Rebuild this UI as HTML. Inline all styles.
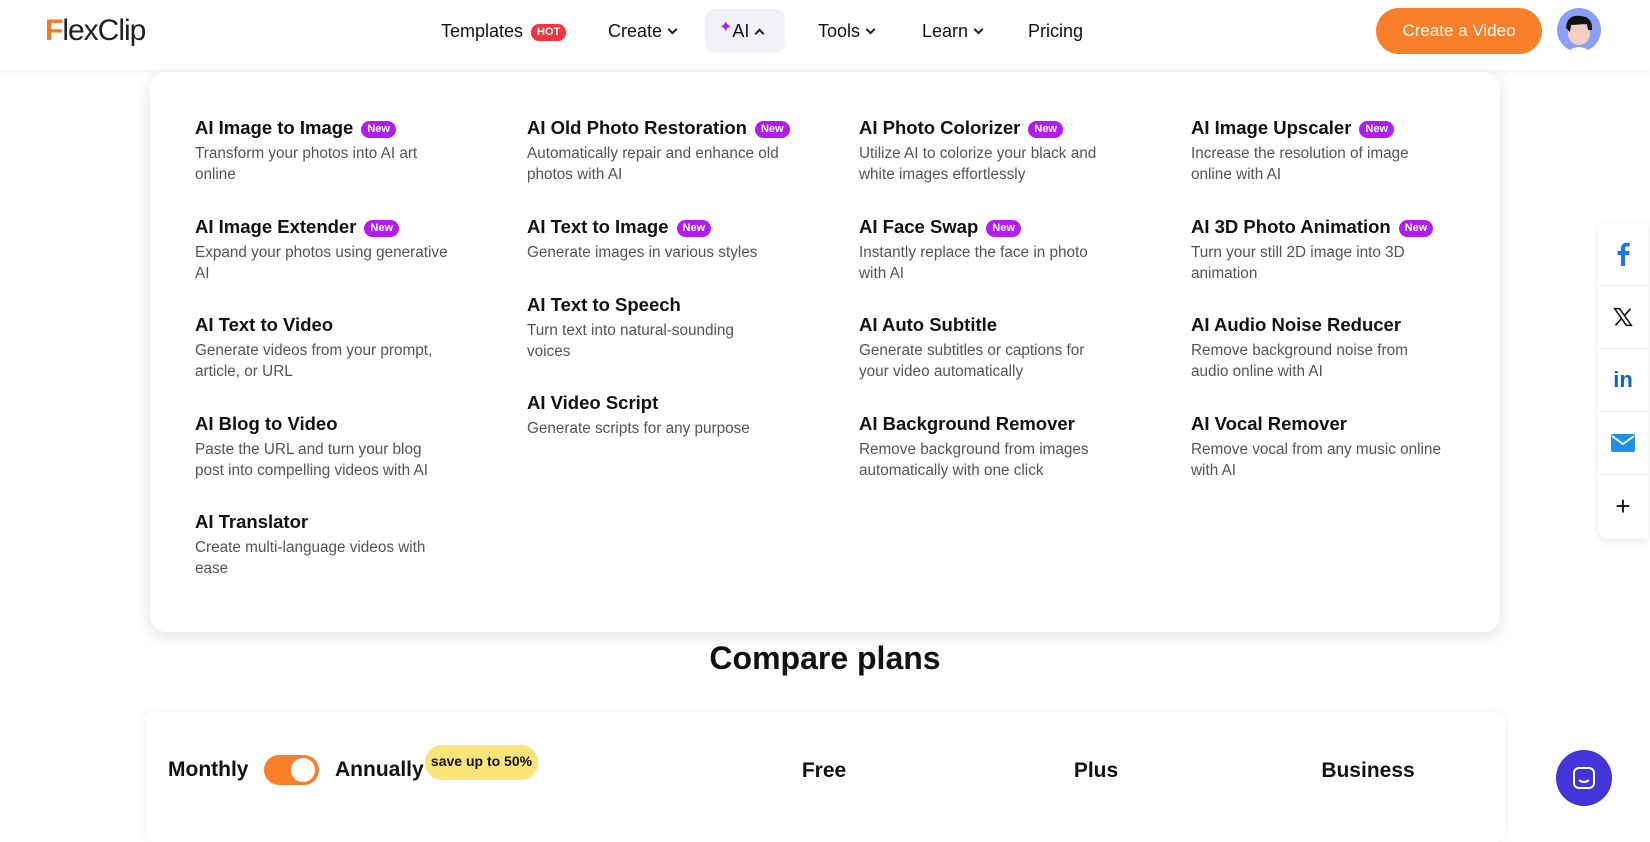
<!DOCTYPE html>
<html><head><meta charset="utf-8"><style>
*{margin:0;padding:0;box-sizing:border-box}
body{width:1650px;height:825px;overflow:hidden;background:#fff;font-family:"Liberation Sans",sans-serif;color:#111;position:relative}
.hdr{position:absolute;left:0;top:0;width:1650px;height:70px;background:#fff;box-shadow:0 2px 6px rgba(0,0,0,.05)}
.nav{position:absolute;top:21px;font-size:18px;color:#111}
.chev{display:inline-block;width:7px;height:7px;border-right:2px solid #222;border-bottom:2px solid #222;transform:rotate(45deg);margin-left:7px;position:relative;top:-4px}
.chev.up{transform:rotate(-135deg);top:0}
.panel{position:absolute;left:150px;top:72px;width:1350px;height:560px;background:#fff;border-radius:16px;box-shadow:0 4px 18px rgba(0,0,0,.12)}
.it{position:absolute;width:252px}
.it h4{font-size:18.5px;font-weight:600;line-height:22px;color:#111;white-space:nowrap}
.it p{font-size:15.3px;line-height:20.5px;color:#555;margin-top:5px}
.new{display:inline-block;background:#b21cf2;color:#fff;font-size:11px;font-weight:700;padding:0 6px;height:17px;line-height:17px;border-radius:9px;margin-left:8px;vertical-align:2px}
.soc{position:absolute;left:1598px;top:223px;width:50px;height:316px;background:#fff;border-radius:10px 0 0 10px;box-shadow:0 2px 10px rgba(0,0,0,.1)}
.soc div{height:63px;border-bottom:1px solid #eee;display:flex;align-items:center;justify-content:center}
.soc div:last-child{border:none}
</style></head><body>
<div class="hdr"></div>
<div style="position:absolute;left:45px;top:14px;font-size:30px;color:#222;letter-spacing:-1px"><span style="color:#f7791f;font-weight:700">F</span>lexClip</div>
<div class="nav" style="left:441px">Templates <span style="display:inline-block;background:#f2343f;color:#fff;font-size:11px;font-weight:700;padding:0 6px;height:17px;line-height:17px;border-radius:8px;vertical-align:2px;margin-left:3px">HOT</span></div>
<div class="nav" style="left:608px">Create<span class="chev"></span></div>
<div style="position:absolute;left:705px;top:9px;width:80px;height:44px;border-radius:10px;background:#f3f1f8"></div>
<div class="nav" style="left:719px"><span style="color:#b21cf2;font-size:16px;position:relative;top:-5px">✦</span>AI<span class="chev up"></span></div>
<div class="nav" style="left:818px">Tools<span class="chev"></span></div>
<div class="nav" style="left:922px">Learn<span class="chev"></span></div>
<div class="nav" style="left:1028px">Pricing</div>
<div style="position:absolute;left:1376px;top:8px;width:166px;height:46px;border-radius:23px;background:#f97f2b;color:#fff;font-size:17px;text-align:center;line-height:46px">Create a Video</div>
<svg style="position:absolute;left:1557px;top:8px" width="44" height="44" viewBox="0 0 44 44"><circle cx="22" cy="22" r="22" fill="#8a9ff5"/><circle cx="22" cy="26" r="11" fill="#f6cfc0"/><path d="M9 20 Q10 6 24 8 Q36 9 35 22 L31 22 L30 16 L14 17 L13 24 Z" fill="#111"/><path d="M10 44 Q22 34 34 44 Z" fill="#fff"/></svg>

<div class="panel"></div>
<div class="it" style="left:195px;top:117px"><h4>AI Image to Image<span class="new">New</span></h4><p>Transform your photos into AI art online</p></div>
<div class="it" style="left:195px;top:216px;width:262px"><h4>AI Image Extender<span class="new">New</span></h4><p>Expand your photos using generative AI</p></div>
<div class="it" style="left:195px;top:314px"><h4>AI Text to Video</h4><p>Generate videos from your prompt, article, or URL</p></div>
<div class="it" style="left:195px;top:413px"><h4>AI Blog to Video</h4><p>Paste the URL and turn your blog post into compelling videos with AI</p></div>
<div class="it" style="left:195px;top:511px"><h4>AI Translator</h4><p>Create multi-language videos with ease</p></div>

<div class="it" style="left:527px;top:117px"><h4>AI Old Photo Restoration<span class="new">New</span></h4><p>Automatically repair and enhance old photos with AI</p></div>
<div class="it" style="left:527px;top:216px"><h4>AI Text to Image<span class="new">New</span></h4><p>Generate images in various styles</p></div>
<div class="it" style="left:527px;top:294px"><h4>AI Text to Speech</h4><p>Turn text into natural-sounding voices</p></div>
<div class="it" style="left:527px;top:392px"><h4>AI Video Script</h4><p>Generate scripts for any purpose</p></div>

<div class="it" style="left:859px;top:117px"><h4>AI Photo Colorizer<span class="new">New</span></h4><p>Utilize AI to colorize your black and white images effortlessly</p></div>
<div class="it" style="left:859px;top:216px"><h4>AI Face Swap<span class="new">New</span></h4><p>Instantly replace the face in photo with AI</p></div>
<div class="it" style="left:859px;top:314px"><h4>AI Auto Subtitle</h4><p>Generate subtitles or captions for your video automatically</p></div>
<div class="it" style="left:859px;top:413px"><h4>AI Background Remover</h4><p>Remove background from images automatically with one click</p></div>

<div class="it" style="left:1191px;top:117px"><h4>AI Image Upscaler<span class="new">New</span></h4><p>Increase the resolution of image online with AI</p></div>
<div class="it" style="left:1191px;top:216px"><h4>AI 3D Photo Animation<span class="new">New</span></h4><p>Turn your still 2D image into 3D animation</p></div>
<div class="it" style="left:1191px;top:314px"><h4>AI Audio Noise Reducer</h4><p>Remove background noise from audio online with AI</p></div>
<div class="it" style="left:1191px;top:413px"><h4>AI Vocal Remover</h4><p>Remove vocal from any music online with AI</p></div>

<div style="position:absolute;left:0;width:1650px;top:640px;text-align:center;font-size:32px;font-weight:700">Compare plans</div>
<div style="position:absolute;left:145px;top:712px;width:1360px;height:130px;border-radius:10px;box-shadow:0 0 8px rgba(0,0,0,.08);background:#fff"></div>
<div style="position:absolute;left:168px;top:758px;font-size:21px;font-weight:700">Monthly</div>
<div style="position:absolute;left:264px;top:755px;width:55px;height:30px;border-radius:15px;background:#f97f2b"><div style="position:absolute;right:4px;top:3px;width:24px;height:24px;border-radius:50%;background:#fff"></div></div>
<div style="position:absolute;left:335px;top:758px;font-size:21px;font-weight:700">Annually</div>
<div style="position:absolute;left:425px;top:745px;width:113px;height:35px;border-radius:17px;background:#fbe47a;font-size:14px;font-weight:700;text-align:center;line-height:32px">save up to 50%</div>
<div style="position:absolute;left:774px;width:100px;text-align:center;top:759px;font-size:21px;font-weight:700">Free</div>
<div style="position:absolute;left:1046px;width:100px;text-align:center;top:759px;font-size:21px;font-weight:700">Plus</div>
<div style="position:absolute;left:1308px;width:120px;text-align:center;top:759px;font-size:21px;font-weight:700">Business</div>

<div class="soc">
<div><svg width="14" height="24" viewBox="0 0 14 24"><path d="M9 24V13h4l.6-4H9V6.5C9 5.3 9.4 4.5 11 4.5h2.7V.9C13.2.8 12 .7 10.6.7 7.6.7 5 2.5 5 6v3H1.5v4H5v11z" fill="#1877f2"/></svg></div>
<div><svg width="20" height="20" viewBox="0 0 24 24"><path d="M2 2h6l14 20h-6z" fill="none" stroke="#111" stroke-width="1.8"/><path d="M21 2L13.5 10.5M3 22l7.5-8.5" stroke="#111" stroke-width="2"/></svg></div>
<div><span style="color:#0a66c2;font-weight:700;font-size:22px">in</span></div>
<div><svg width="24" height="18" viewBox="0 0 24 18"><rect width="24" height="18" rx="2" fill="#1e8ef0"/><path d="M1 2l11 8 11-8" fill="none" stroke="#fff" stroke-width="2"/></svg></div>
<div><span style="font-size:26px;color:#111">+</span></div>
</div>
<div style="position:absolute;left:1556px;top:750px;width:56px;height:56px;border-radius:50%;background:#4236d8"><svg style="position:absolute;left:16px;top:16px" width="24" height="24" viewBox="0 0 24 24"><rect x="2" y="2" width="20" height="20" rx="5" fill="none" stroke="#fff" stroke-width="2"/><path d="M7 14q5 4 10 0" fill="none" stroke="#fff" stroke-width="2"/></svg></div>
</body></html>
